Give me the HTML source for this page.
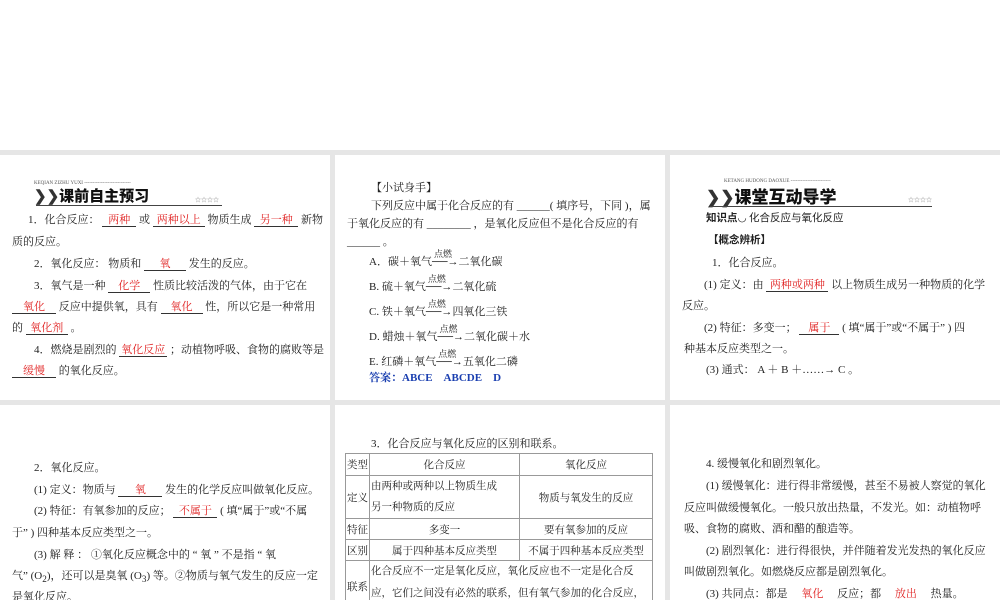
<!DOCTYPE html>
<html style="overflow:hidden"><head><meta charset="utf-8"><style>
body{margin:0;width:1000px;height:600px;background:#fff;position:relative;overflow:hidden;font-family:"Liberation Serif","Noto Serif CJK SC",serif;font-size:11px;color:#222}
.bg{position:absolute;left:0;top:150px;width:1000px;height:450px;background:#e6e6e6}
.p{position:absolute;background:#fff;overflow:hidden}
.l{position:absolute;white-space:nowrap}
.u{display:inline-block;border-bottom:1px solid #333;color:#e02020;text-align:center;line-height:11px}
.h{font-family:"Noto Sans CJK SC",sans-serif;font-weight:900;font-size:15px;color:#111}
.s{font-family:"Noto Sans CJK SC",sans-serif}
table{border-collapse:collapse;position:absolute;left:10px;top:48px;width:308px;font-size:10.5px;table-layout:fixed}
td{border:1px solid #999;text-align:center;padding:0 1px;height:20px;white-space:nowrap;overflow:hidden}
.ab{position:relative;display:inline-block}
.ab small{position:absolute;left:2px;top:-9px;font-size:9px}
</style></head><body>
<div class="bg"></div>

<div class="p" style="left:0;top:155px;width:330px;height:245px">
 <div class="l" style="left:34px;top:26px;font-size:5px;color:#555">KEQIAN ZIZHU YUXI ----------------------------</div>
 <div class="l h" style="left:34px;top:30px"><span style="color:#333">❯❯</span>课前自主预习</div>
 <div class="l" style="left:36px;top:50px;width:186px;border-top:1px solid #444"></div>
 <div class="l" style="left:195px;top:40px;font-size:6px;color:#888">☆☆☆☆</div>
 <div class="l" style="left:28px;top:56px">1．化合反应： <span class="u" style="width:34px">两种</span> 或 <span class="u" style="width:52px">两种以上</span> 物质生成 <span class="u" style="width:44px">另一种</span> 新物</div>
 <div class="l" style="left:12px;top:78px">质的反应。</div>
 <div class="l" style="left:34px;top:100px">2．氧化反应： 物质和 <span class="u" style="width:42px">氧</span> 发生的反应。</div>
 <div class="l" style="left:34px;top:122px">3．氧气是一种 <span class="u" style="width:42px">化学</span> 性质比较活泼的气体，由于它在</div>
 <div class="l" style="left:12px;top:143px"><span class="u" style="width:44px">氧化</span> 反应中提供氧，具有 <span class="u" style="width:42px">氧化</span> 性，所以它是一种常用</div>
 <div class="l" style="left:12px;top:164px">的 <span class="u" style="width:42px">氧化剂</span> 。</div>
 <div class="l" style="left:34px;top:186px">4．燃烧是剧烈的 <span class="u" style="width:48px">氧化反应</span> ；动植物呼吸、食物的腐败等是</div>
 <div class="l" style="left:12px;top:207px"><span class="u" style="width:44px">缓慢</span> 的氧化反应。</div>
</div>

<div class="p" style="left:335px;top:155px;width:330px;height:245px">
 <div class="l" style="left:36px;top:24px">【小试身手】</div>
 <div class="l" style="left:36px;top:42px">下列反应中属于化合反应的有 ______( 填序号，下同 )，属</div>
 <div class="l" style="left:12px;top:60px">于氧化反应的有 ________ ，是氧化反应但不是化合反应的有</div>
 <div class="l" style="left:12px;top:78px">______ 。</div>
 <div class="l" style="left:34px;top:98px">A．碳＋氧气<span class="ab"><small>点燃</small>──→</span>二氧化碳</div>
 <div class="l" style="left:34px;top:123px">B. 硫＋氧气<span class="ab"><small>点燃</small>──→</span>二氧化硫</div>
 <div class="l" style="left:34px;top:148px">C. 铁＋氧气<span class="ab"><small>点燃</small>──→</span>四氧化三铁</div>
 <div class="l" style="left:34px;top:173px">D. 蜡烛＋氧气<span class="ab"><small>点燃</small>──→</span>二氧化碳＋水</div>
 <div class="l" style="left:34px;top:198px">E. 红磷＋氧气<span class="ab"><small>点燃</small>──→</span>五氧化二磷</div>
 <div class="l" style="left:34px;top:214px;color:#1a3fb0;font-weight:bold">答案：ABCE　ABCDE　D</div>
</div>

<div class="p" style="left:670px;top:155px;width:330px;height:245px">
 <div class="l" style="left:54px;top:24px;font-size:5px;color:#555">KETANG HUDONG DAOXUE ------------------------</div>
 <div class="l h" style="left:36px;top:28px;font-size:17px"><span style="color:#333">❯❯</span>课堂互动导学</div>
 <div class="l" style="left:40px;top:51px;width:222px;border-top:1px solid #444"></div>
 <div class="l" style="left:238px;top:40px;font-size:6px;color:#888">☆☆☆☆</div>
 <div class="l s" style="left:36px;top:55px;font-size:10.5px"><b>知识点</b>◡ 化合反应与氧化反应</div>
 <div class="l s" style="left:38px;top:77px;font-size:10.5px;font-weight:bold">【概念辨析】</div>
 <div class="l" style="left:42px;top:99px">1．化合反应。</div>
 <div class="l" style="left:34px;top:121px">(1) 定义：由 <span class="u" style="width:62px">两种或两种</span> 以上物质生成另一种物质的化学</div>
 <div class="l" style="left:12px;top:142px">反应。</div>
 <div class="l" style="left:34px;top:164px">(2) 特征：多变一； <span class="u" style="width:40px">属于</span> ( 填“属于”或“不属于” ) 四</div>
 <div class="l" style="left:14px;top:185px">种基本反应类型之一。</div>
 <div class="l" style="left:36px;top:206px">(3) 通式： A ＋ B ＋……→ C 。</div>
</div>

<div class="p" style="left:0;top:405px;width:330px;height:195px">
 <div class="l" style="left:34px;top:54px">2．氧化反应。</div>
 <div class="l" style="left:34px;top:76px">(1) 定义：物质与 <span class="u" style="width:44px">氧</span> 发生的化学反应叫做氧化反应。</div>
 <div class="l" style="left:34px;top:97px">(2) 特征：有氧参加的反应； <span class="u" style="width:44px">不属于</span> ( 填“属于”或“不属</div>
 <div class="l" style="left:12px;top:119px">于” ) 四种基本反应类型之一。</div>
 <div class="l" style="left:34px;top:141px">(3) 解 释 ： ①氧化反应概念中的 “ 氧 ” 不是指 “ 氧</div>
 <div class="l" style="left:12px;top:162px">气” (O<sub>2</sub>)，还可以是臭氧 (O<sub>3</sub>) 等。②物质与氧气发生的反应一定</div>
 <div class="l" style="left:12px;top:183px">是氧化反应。</div>
</div>

<div class="p" style="left:335px;top:405px;width:330px;height:195px">
 <div class="l" style="left:36px;top:30px">3．化合反应与氧化反应的区别和联系。</div>
 <table>
  <colgroup><col style="width:24px"><col style="width:150px"><col></colgroup>
  <tr><td style="height:21px">类型</td><td>化合反应</td><td>氧化反应</td></tr>
  <tr><td style="height:42px">定义</td><td style="text-align:left;line-height:21px">由两种或两种以上物质生成<br>另一种物质的反应</td><td>物质与氧发生的反应</td></tr>
  <tr><td>特征</td><td>多变一</td><td>要有氧参加的反应</td></tr>
  <tr><td>区别</td><td>属于四种基本反应类型</td><td>不属于四种基本反应类型</td></tr>
  <tr><td style="height:50px">联系</td><td colspan="2" style="text-align:left;line-height:22px;vertical-align:top">化合反应不一定是氧化反应，氧化反应也不一定是化合反<br>应，它们之间没有必然的联系，但有氧气参加的化合反应，</td></tr>
 </table>
</div>

<div class="p" style="left:670px;top:405px;width:330px;height:195px">
 <div class="l" style="left:36px;top:50px">4. 缓慢氧化和剧烈氧化。</div>
 <div class="l" style="left:36px;top:72px">(1) 缓慢氧化：进行得非常缓慢，甚至不易被人察觉的氧化</div>
 <div class="l" style="left:14px;top:94px">反应叫做缓慢氧化。一般只放出热量，不发光。如：动植物呼</div>
 <div class="l" style="left:14px;top:115px">吸、食物的腐败、酒和醋的酿造等。</div>
 <div class="l" style="left:36px;top:137px">(2) 剧烈氧化：进行得很快，并伴随着发光发热的氧化反应</div>
 <div class="l" style="left:14px;top:158px">叫做剧烈氧化。如燃烧反应都是剧烈氧化。</div>
 <div class="l" style="left:36px;top:180px">(3) 共同点：都是 <span class="u" style="width:44px">氧化</span> 反应；都 <span class="u" style="width:44px">放出</span> 热量。</div>
</div>
</body></html>
